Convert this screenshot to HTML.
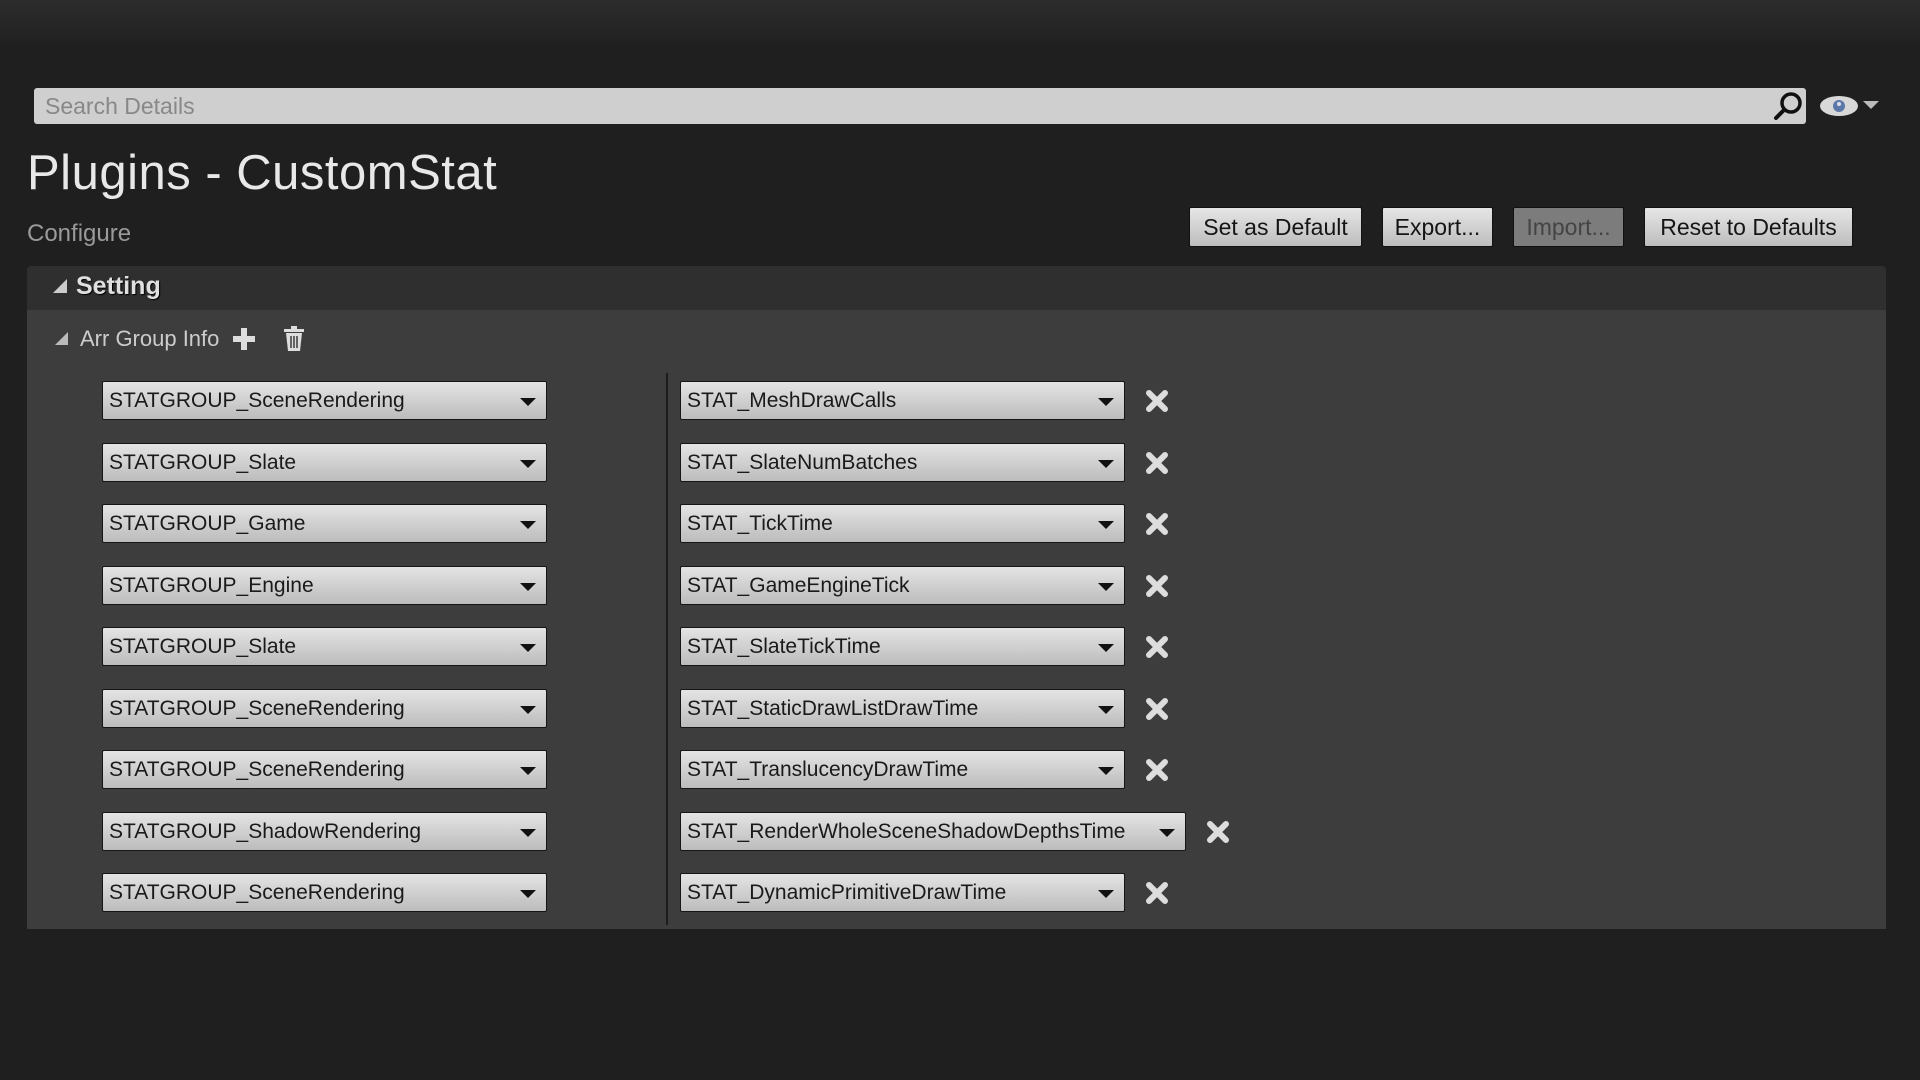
<!DOCTYPE html>
<html><head><meta charset="utf-8"><style>
*{margin:0;padding:0;box-sizing:border-box}
body{width:1920px;height:1080px;background:#1f1f1f;font-family:"Liberation Sans",sans-serif;position:relative;overflow:hidden}
.top{position:absolute;left:0;top:0;width:1920px;height:45px;background:linear-gradient(#2c2c2c,#222 90%,#1f1f1f)}
.abs{position:absolute}
.search{left:34px;top:88px;width:1772px;height:36px;background:#cfcfcf;border-radius:3px;color:#888;font-size:23px;padding:5px 0 0 11px}
h1{position:absolute;left:27px;top:145px;font-size:49px;font-weight:normal;color:#e8e8e8;letter-spacing:0.5px}
.conf{left:27px;top:220px;font-size:24px;color:#9a9a9a}
.btn{position:absolute;top:207px;height:40px;background:linear-gradient(#e6e6e6,#bdbdbd);border:1px solid #111;border-radius:2px;color:#151515;font-size:23px;text-align:center;line-height:38px}
.sethead{left:27px;top:266px;width:1859px;height:44px;background:#2f2f2f;border-radius:4px 4px 0 0}
.body{left:27px;top:310px;width:1859px;height:619px;background:#3d3d3d}
.combo{position:absolute;height:39px;background:linear-gradient(#e4e4e4,#bcbcbc);border:1px solid #161616;border-radius:2px;color:#1a1a1a;font-size:21px;line-height:37px;padding-left:6px;white-space:nowrap}
.combo .ar{position:absolute;right:10px;top:16px;width:0;height:0;border-left:8px solid transparent;border-right:8px solid transparent;border-top:8px solid #111}
.x{position:absolute;width:24px;height:22px}
.tri{position:absolute;width:0;height:0;border-left:14px solid transparent;border-bottom:14px solid #ccc}
</style></head><body>
<div class="top"></div>
<div class="abs search">Search Details</div>
<svg class="abs" style="left:1772px;top:90px" width="34" height="32" viewBox="0 0 34 32"><circle cx="19" cy="13" r="9" fill="none" stroke="#111" stroke-width="3.5"/><line x1="12" y1="20" x2="4" y2="28" stroke="#111" stroke-width="4" stroke-linecap="round"/></svg>
<svg class="abs" style="left:1818px;top:94px" width="64" height="24" viewBox="0 0 64 24"><ellipse cx="21" cy="12" rx="19" ry="10" fill="#d8d8d8"/><circle cx="21" cy="12" r="6" fill="#5b78a8"/><circle cx="21" cy="10" r="2" fill="#dde"/><polygon points="45,7 61,7 53,15" fill="#bbb"/></svg>
<h1>Plugins - CustomStat</h1>
<div class="abs conf">Configure</div>
<div class="btn" style="left:1189px;width:173px">Set as Default</div>
<div class="btn" style="left:1382px;width:111px">Export...</div>
<div class="btn" style="left:1513px;width:111px;background:#7c7c7c;color:#444">Import...</div>
<div class="btn" style="left:1644px;width:209px">Reset to Defaults</div>
<div class="abs sethead"></div>
<div class="tri" style="left:53px;top:279px"></div>
<div class="abs" style="left:76px;top:272px;font-size:25px;font-weight:bold;color:#e0e0e0;text-shadow:1px 1px 1px #000">Setting</div>
<div class="abs body"></div>
<div class="tri" style="left:55px;top:332px;border-left-width:13px;border-bottom-width:13px;border-bottom-color:#bbb"></div>
<div class="abs" style="left:80px;top:326px;font-size:22px;color:#ccc">Arr Group Info</div>
<svg class="abs" style="left:233px;top:328px" width="22" height="22"><rect x="8" y="0" width="6" height="22" fill="#ddd"/><rect x="0" y="8" width="22" height="6" fill="#ddd"/></svg>
<svg class="abs" style="left:283px;top:326px" width="22" height="26" viewBox="0 0 22 26"><rect x="1" y="3" width="20" height="3" fill="#ddd"/><rect x="8" y="0" width="6" height="3" fill="#ddd"/><path d="M3 7h16l-2 18H5z" fill="#ddd"/><path d="M8 10v12M11 10v12M14 10v12" stroke="#3d3d3d" stroke-width="1.5"/></svg>
<div class="abs" style="left:666px;top:373px;width:2px;height:552px;background:#1c1c1c"></div>
<div id="rows"></div>
<script>
var L=["STATGROUP_SceneRendering","STATGROUP_Slate","STATGROUP_Game","STATGROUP_Engine","STATGROUP_Slate","STATGROUP_SceneRendering","STATGROUP_SceneRendering","STATGROUP_ShadowRendering","STATGROUP_SceneRendering"];
var R=["STAT_MeshDrawCalls","STAT_SlateNumBatches","STAT_TickTime","STAT_GameEngineTick","STAT_SlateTickTime","STAT_StaticDrawListDrawTime","STAT_TranslucencyDrawTime","STAT_RenderWholeSceneShadowDepthsTime","STAT_DynamicPrimitiveDrawTime"];
var h="";
for(var i=0;i<9;i++){var t=Math.round(381+i*61.5);var w=(i==7)?506:445;
h+='<div class="combo" style="left:102px;top:'+t+'px;width:445px">'+L[i]+'<div class="ar"></div></div>';
h+='<div class="combo" style="left:680px;top:'+t+'px;width:'+w+'px">'+R[i]+'<div class="ar"></div></div>';
h+='<svg class="x" style="left:'+(680+w+20)+'px;top:'+(t+9)+'px" viewBox="0 0 24 22"><path d="M4 3L20 19M20 3L4 19" stroke="#ddd" stroke-width="6" stroke-linecap="round"/></svg>';}
document.getElementById("rows").innerHTML=h;
</script>
</body></html>
